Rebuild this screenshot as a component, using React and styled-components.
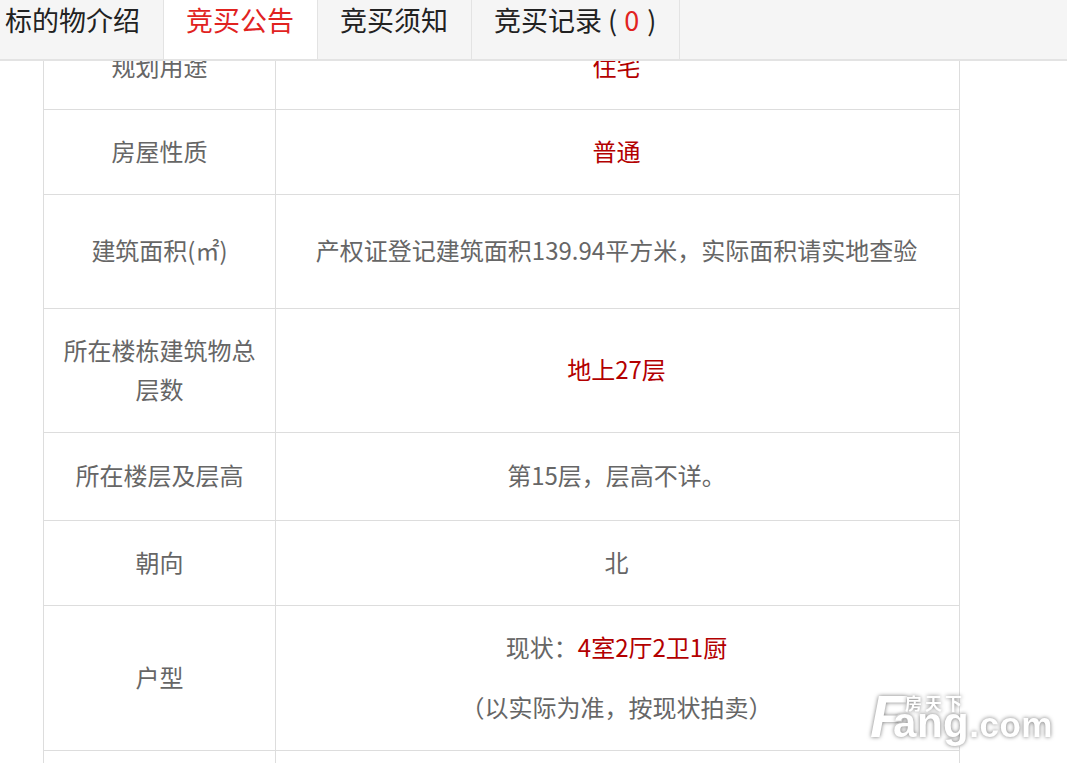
import React from 'react';
import styled, { createGlobalStyle } from 'styled-components';

const Global = createGlobalStyle`
  html, body {
    margin: 0;
    padding: 0;
    height: 100%;
    overflow: hidden;
    background: #fff;
    font-family: "Noto Sans CJK SC", "Liberation Sans", sans-serif;
  }
`;

const TabBar = styled.div`
  position: fixed;
  top: 0;
  left: 0;
  width: 100%;
  height: 61px;
  box-sizing: border-box;
  display: flex;
  background: #f5f5f5;
  border-bottom: 2px solid #e3e3e3;
  overflow: hidden;
  z-index: 2;
`;

const Tab = styled.div`
  flex: none;
  box-sizing: border-box;
  height: 59px;
  padding: 0 22.5px;
  margin-left: ${(p) => (p.$first ? '-17.5px' : '0')};
  line-height: 40px;
  font-size: 27px;
  color: ${(p) => (p.$active ? '#e1231f' : '#222')};
  background: ${(p) => (p.$active ? '#fff' : 'transparent')};
  border-right: 1px solid #e3e3e3;
`;

const Count = styled.span`
  margin: 0 2px 0 1px;
  color: #e1231f;
`;

const Sheet = styled.table`
  margin: 24px 0 0 43px;
  width: 917px;
  border-collapse: collapse;
  table-layout: fixed;
  font-size: 24px;
  line-height: 39px;
  color: #666;
  text-align: center;
`;

const Row = styled.tr`
  height: ${(p) => p.$height}px;
`;

const Label = styled.td`
  width: 232px;
  padding: 0 15px 4px;
  box-sizing: border-box;
  border: 1px solid #ddd;
`;

const Value = styled.td`
  padding: 0 16px 4px 14px;
  border: 1px solid #ddd;
  color: ${(p) => (p.$red ? '#b30000' : '#666')};
`;

const Red = styled.span`
  color: #b30000;
`;

const Line = styled.p`
  margin: 0 0 21px;

  &:last-child {
    margin-bottom: 0;
  }
`;

const Watermark = styled.div`
  position: fixed;
  left: 870px;
  top: 687px;
  display: flex;
  align-items: baseline;
  color: #fff;
  font-family: "Liberation Sans", sans-serif;
  font-weight: 700;
  -webkit-text-stroke: 2px #fff;
  paint-order: stroke fill;
  text-shadow: 0 0 4px rgba(0, 0, 0, 0.55);
  z-index: 1;
`;

const BrandInitial = styled.span`
  margin-right: -13px;
  font-size: 59px;
  line-height: 60px;
  font-style: italic;
`;

const BrandRest = styled.span`
  font-size: 42px;
  line-height: 60px;
  letter-spacing: 0.5px;
`;

const BrandCom = styled.span`
  font-size: 35px;
  line-height: 60px;
  letter-spacing: 0.5px;
`;

const BrandCn = styled.span`
  position: absolute;
  left: 35px;
  top: 6px;
  font-family: "Noto Sans CJK SC", sans-serif;
  font-size: 17px;
  line-height: 20px;
  letter-spacing: 3px;
  -webkit-text-stroke: 0.5px #fff;
`;

const App = () => (
  <>
    <Global />
    <Sheet>
      <tbody>
        <Row $height={85}>
          <Label>规划用途</Label>
          <Value $red>住宅</Value>
        </Row>
        <Row $height={85}>
          <Label>房屋性质</Label>
          <Value $red>普通</Value>
        </Row>
        <Row $height={114}>
          <Label>建筑面积(㎡)</Label>
          <Value>产权证登记建筑面积139.94平方米，实际面积请实地查验</Value>
        </Row>
        <Row $height={124}>
          <Label>所在楼栋建筑物总层数</Label>
          <Value $red>地上27层</Value>
        </Row>
        <Row $height={88}>
          <Label>所在楼层及层高</Label>
          <Value>第15层，层高不详。</Value>
        </Row>
        <Row $height={85}>
          <Label>朝向</Label>
          <Value>北</Value>
        </Row>
        <Row $height={145}>
          <Label>户型</Label>
          <Value>
            <Line>
              现状：<Red>4室2厅2卫1厨</Red>
            </Line>
            <Line>（以实际为准，按现状拍卖）</Line>
          </Value>
        </Row>
        <Row $height={85}>
          <Label />
          <Value />
        </Row>
      </tbody>
    </Sheet>
    <TabBar>
      <Tab $first>标的物介绍</Tab>
      <Tab $active>竞买公告</Tab>
      <Tab>竞买须知</Tab>
      <Tab>
        竞买记录 ( <Count>0</Count> )
      </Tab>
    </TabBar>
    <Watermark>
      <BrandInitial>F</BrandInitial>
      <BrandRest>ang</BrandRest>
      <BrandCom>.com</BrandCom>
      <BrandCn>房天下</BrandCn>
    </Watermark>
  </>
);

export default App;
